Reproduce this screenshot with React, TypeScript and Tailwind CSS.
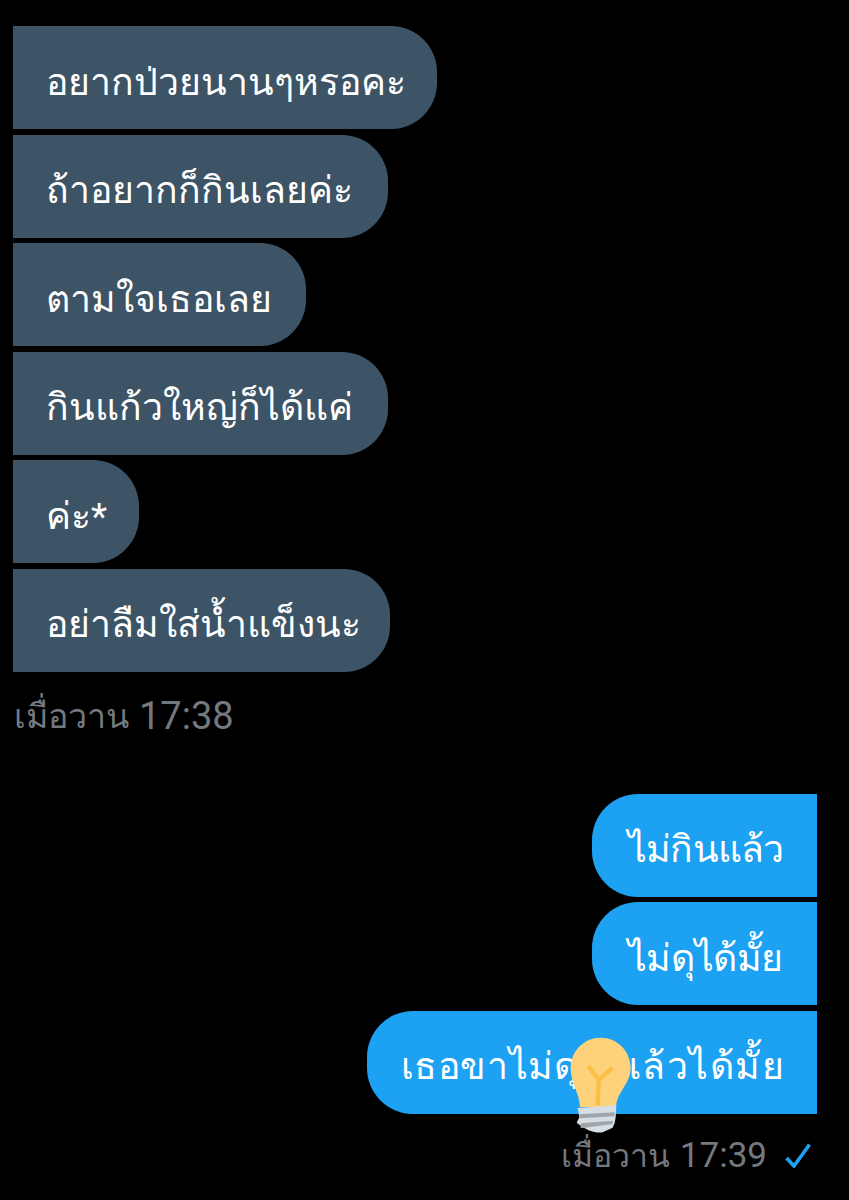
function L({ t, w }: { t: string; w: string }) {
  return (
    <div className={`${w} h-[103px] bg-[#3d5466] rounded-r-[46px] flex items-center pl-[33px] pt-[8px] text-white text-[37.4px] leading-[60px] whitespace-nowrap`}>{t}</div>
  );
}
function R({ w, children }: { w: string; children: React.ReactNode }) {
  return (
    <div className={`${w} h-[103px] bg-[#1da1f2] rounded-l-[46px] flex items-center justify-end pr-[34px] pt-[8px] text-white text-[37.4px] leading-[60px] whitespace-nowrap`}>{children}</div>
  );
}
export default function App() {
  return (
    <div className="w-[849px] h-[1200px] bg-black overflow-hidden pt-[26px] font-['Roboto',sans-serif]">
      <div className="ml-[13px] flex flex-col gap-[5.5px]">
        <L t="อยากป่วยนานๆหรอคะ" w="w-[424px]" />
        <L t="ถ้าอยากก็กินเลยค่ะ" w="w-[375px]" />
        <L t="ตามใจเธอเลย" w="w-[293px]" />
        <L t="กินแก้วใหญ่ก็ได้แค่" w="w-[375px]" />
        <L t="ค่ะ*" w="w-[126px]" />
        <L t="อย่าลืมใส่น้ำแข็งนะ" w="w-[377px]" />
      </div>
      <div className="ml-[14px] mt-[19px] h-[50px] flex items-center gap-[10px] text-[#74797f] whitespace-nowrap">
        <span className="text-[34px] leading-[50px]">เมื่อวาน</span>
        <span className="text-[38px] leading-[50px]">17:38</span>
      </div>
      <div className="mt-[53px] mr-[32px] flex flex-col items-end gap-[5.5px]">
        <R w="w-[225px]"><span className="tracking-[-0.9px]">ไม่กินแล้ว</span></R>
        <R w="w-[225px]"><span className="tracking-[-0.4px]">ไม่ดุได้มั้ย</span></R>
        <div className="relative">
          <R w="w-[450px]">
            <span className="tracking-[0.6px]">เธอขาไม่ดุ</span>
            <span className="inline-block w-[38px]" />
            <span className="tracking-[1.5px] mr-[-2px]">แล้วได้มั้ย</span>
          </R>
          <svg className="absolute left-[203px] top-[26px]" width="62" height="97" viewBox="90 110 186 291">
            <path d="M182 112c-50 0-90 40-90 92 0 46 26 72 28 116h108c2-44 44-70 44-116 0-52-40-92-90-92z" fill="#fdd27a" />
            <path d="M145 197l31 42 41-36M176 239l-3 76" stroke="#fbbf45" strokeWidth="13" fill="none" />
            <path d="M113 323l116-8-2 36-3 17-6 14-30 14c-20 4-50-6-78-29l8-16z" fill="#d6dde3" />
            <path d="M118 342l106-6-1 12-106 6zM122 369l96-8v10l-96 13z" fill="#9ea5ab" />
          </svg>
        </div>
      </div>
      <div className="mt-[17px] mr-[38px] h-[50px] flex justify-end items-center text-[#74797f] whitespace-nowrap">
        <span className="text-[32px] leading-[50px]">เมื่อวาน</span>
        <span className="text-[35px] leading-[50px] ml-[10px] mr-[18px]">17:39</span>
        <svg width="26" height="25" viewBox="0 0 26 25"><path d="M1.5 15l7.5 8L24.5 1.5" stroke="#1da1f2" strokeWidth="3.6" fill="none" /></svg>
      </div>
    </div>
  );
}
